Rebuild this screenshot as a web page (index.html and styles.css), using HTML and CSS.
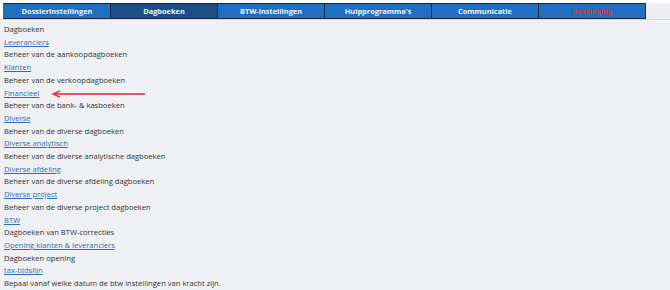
FILE: index.html
```html
<!DOCTYPE html>
<html lang="nl">
<head>
    <meta charset="UTF-8">
    <title>Dagboeken</title>
    <link rel="stylesheet" href="styles.css">
</head>
<body>
<div class="topbar">
    <ul class="tabs">
        <li>Dossierinstellingen</li>
        <li class="active">Dagboeken</li>
        <li>BTW-instellingen</li>
        <li>Hulpprogramma's</li>
        <li>Communicatie</li>
        <li class="warn">Beveiliging</li>
    </ul>
</div>
<div class="content">
    <p>Dagboeken</p>
    <p><a href="#">Leveranciers</a></p>
    <p>Beheer van de aankoopdagboeken</p>
    <p><a href="#">Klanten</a></p>
    <p>Beheer van de verkoopdagboeken</p>
    <p class="marked"><a href="#">Financieel</a>
        <svg class="arrow" width="96" height="8" viewBox="0 0 96 8">
            <line x1="3" y1="4" x2="94" y2="4" stroke="#e8232b" stroke-width="1.3"/>
            <polyline points="9,0.8 2,4 9,7.2" fill="none" stroke="#e8232b" stroke-width="1.3"/>
        </svg>
    </p>
    <p>Beheer van de bank- &amp; kasboeken</p>
    <p><a href="#">Diverse</a></p>
    <p>Beheer van de diverse dagboeken</p>
    <p><a href="#">Diverse analytisch</a></p>
    <p>Beheer van de diverse analytische dagboeken</p>
    <p><a href="#">Diverse afdeling</a></p>
    <p>Beheer van de diverse afdeling dagboeken</p>
    <p><a href="#">Diverse project</a></p>
    <p>Beheer van de diverse project dagboeken</p>
    <p><a href="#">BTW</a></p>
    <p>Dagboeken van BTW-correcties</p>
    <p><a href="#">Opening klanten &amp; leveranciers</a></p>
    <p>Dagboeken opening</p>
    <p><a href="#">tax-tijdslijn</a></p>
    <p>Bepaal vanaf welke datum de btw instellingen van kracht zijn.</p>
</div>
</body>
</html>
```

FILE: styles.css
```css
*{
    margin: 0;
    padding: 0;
}
body{
    background: #eef0f4;
    font-family: "Open Sans", "Liberation Sans", sans-serif;
    color: #333;
}
.topbar{
    background: #fff;
    padding: 3px 0 0 3px;
    border-bottom: 1px solid #d4d6da;
}
.tabs{
    display: flex;
    list-style: none;
    background: #eceef1;
}
.tabs li{
    width: 106px;
    height: 14px;
    line-height: 14px;
    border: 1px solid #1c2a3c;
    border-left-width: 0;
    background: #1f6ebf;
    color: #f2f5fa;
    font-size: 7.4px;
    font-weight: bold;
    text-align: center;
}
.tabs li:first-child{
    border-left-width: 1px;
    border-left-color: #1f6ebf;
}
.tabs li.active{
    background: #1c4f87;
}
.tabs li.warn{
    color: #e3322b;
    border-right-color: #2a3444;
}
.content{
    padding: 3px 0 0 4px;
}
.content p{
    font-size: 7.6px;
    line-height: 12.7px;
    white-space: nowrap;
}
.content a{
    color: #2b6fbc;
}
.marked{
    position: relative;
}
.arrow{
    position: absolute;
    left: 47px;
    top: 3px;
}
```
